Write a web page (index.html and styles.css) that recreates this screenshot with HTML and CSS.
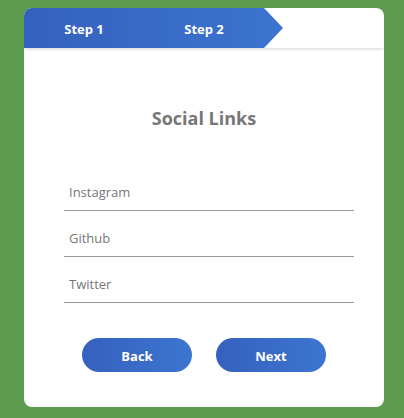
FILE: index.html
```html
<!DOCTYPE html>
<html>
<head>
<meta charset="utf-8">
<link rel="stylesheet" href="styles.css">
</head>
<body>
<div class="card">
  <div class="steps">
    <div class="progress">
      <div class="step">Step 1</div>
      <div class="step">Step 2</div>
    </div>
  </div>
  <h2 class="title">Social Links</h2>
  <div class="fields">
    <input class="field" type="text" placeholder="Instagram">
    <input class="field" type="text" placeholder="Github">
    <input class="field" type="text" placeholder="Twitter">
  </div>
  <div class="actions">
    <button class="btn">Back</button>
    <button class="btn">Next</button>
  </div>
</div>
</body>
</html>
```
FILE: styles.css
```css
html, body {
  margin: 0;
  padding: 0;
}
body {
  background: #5d9b4e;
  height: 418px;
  padding-top: 8px;
  box-sizing: border-box;
  font-family: "Open Sans", "Noto Sans", sans-serif;
}
.card {
  width: 360px;
  height: 399px;
  margin-left: 24px;
  background: #fff;
  border-radius: 8px;
  overflow: hidden;
  box-sizing: border-box;
}
.steps {
  height: 40px;
  box-shadow: 0 1px 3px rgba(0,0,0,0.18);
  position: relative;
}
.progress {
  width: 259px;
  height: 40px;
  display: flex;
  background: linear-gradient(90deg, #3561be 0%, #3b74cf 100%);
  clip-path: polygon(0 0, 240px 0, 259px 50%, 240px 100%, 0 100%);
}
.step {
  width: 120px;
  text-align: center;
  line-height: 42px;
  color: #fff;
  font-weight: 700;
  font-size: 13px;
}
.title {
  margin: 58px 0 0;
  text-align: center;
  font-size: 18px;
  line-height: 24px;
  color: #777;
  font-weight: 700;
}
.fields {
  display: flex;
  flex-direction: column;
  gap: 7px;
  padding: 0 30px 0 40px;
  margin-top: 42px;
}
.field {
  height: 39px;
  border: none;
  border-bottom: 1px solid #9a9a9a;
  padding: 2px 0 0 5px;
  margin: 0;
  font-family: inherit;
  font-size: 13px;
  color: #555;
  outline: none;
  box-sizing: border-box;
  background: transparent;
}
.field::placeholder {
  color: #777;
}
.actions {
  display: flex;
  justify-content: center;
  gap: 24px;
  margin-top: 35px;
}
.btn {
  width: 110px;
  height: 34px;
  border: none;
  border-radius: 17px;
  background: linear-gradient(90deg, #3561be 0%, #3c75d0 100%);
  color: #fff;
  font-family: inherit;
  font-weight: 700;
  font-size: 13px;
  padding: 2px 0 0;
}
```
